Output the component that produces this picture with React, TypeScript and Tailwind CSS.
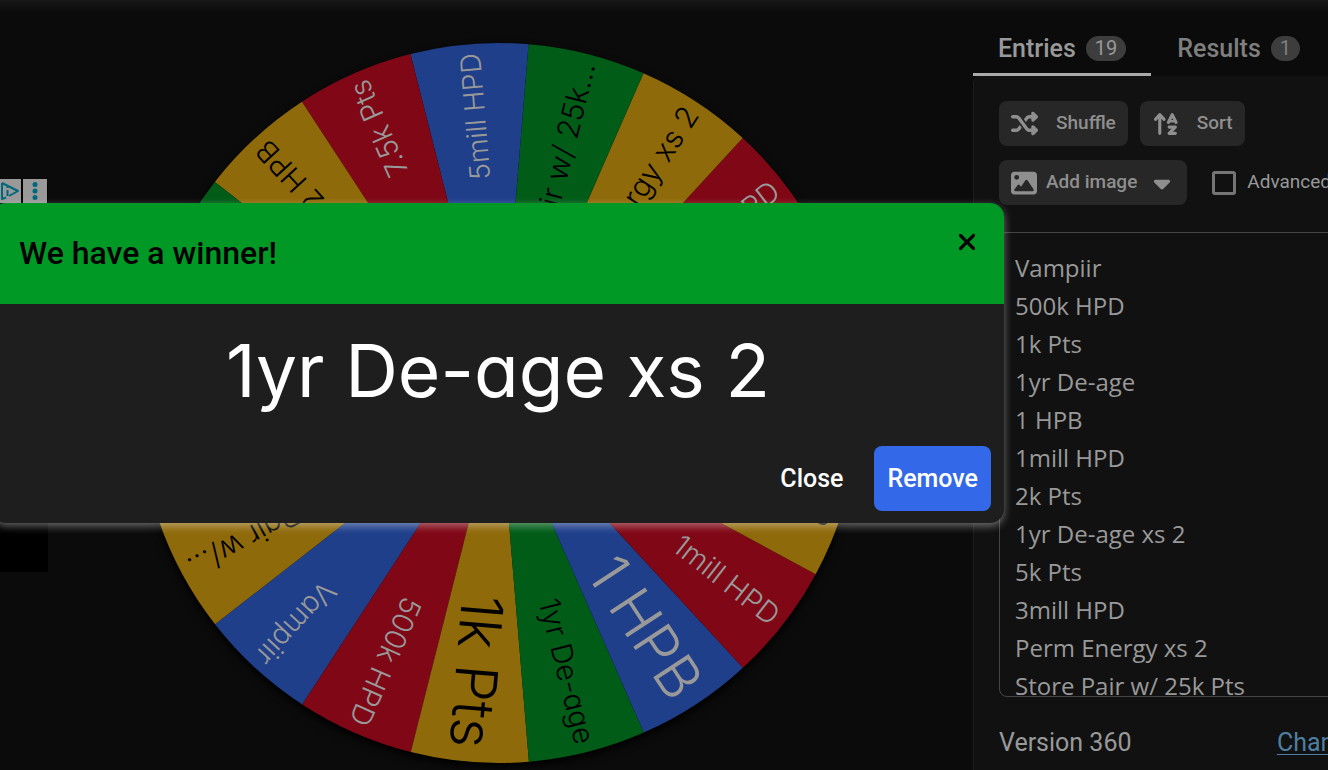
import React, { useState } from 'react';
import { FaArrowUpAZ, FaCaretDown, FaImage, FaShuffle, FaXmark } from 'react-icons/fa6';

interface Slice {
  label: string;
  size?: number;
}

const slices: Slice[] = [
  { label: 'Vampiir' },
  { label: '500k HPD' },
  { label: '1k Pts', size: 58 },
  { label: '1yr De-age' },
  { label: '1 HPB', size: 58 },
  { label: '1mill HPD' },
  { label: '2k Pts' },
  { label: '1yr De-age xs 2' },
  { label: '5k Pts' },
  { label: '3mill HPD' },
  { label: 'Perm Energy xs 2', size: 30 },
  { label: 'Store Pair w/ 25k...', size: 30 },
  { label: '5mill HPD', size: 28 },
  { label: '7.5k Pts' },
  { label: '2 HPB' },
  { label: '' },
  { label: '' },
  { label: '' },
  { label: 'Store Pair w/...', size: 30 },
];

const entries = [
  'Vampiir',
  '500k HPD',
  '1k Pts',
  '1yr De-age',
  '1 HPB',
  '1mill HPD',
  '2k Pts',
  '1yr De-age xs 2',
  '5k Pts',
  '3mill HPD',
  'Perm Energy xs 2',
  'Store Pair w/ 25k Pts',
].join('\n');

const colors = [
  { fill: '#1f3f8b', text: '#999999' },
  { fill: '#800816', text: '#999999' },
  { fill: '#8f6a0a', text: '#000000' },
  { fill: '#005c17', text: '#000000' },
];

const RADIUS = 360;
const STEP = 360 / slices.length;
// Angle of the middle of the first slice, measured clockwise from three o'clock
const START = 132.6;

function rim(deg: number) {
  const rad = (deg * Math.PI) / 180;
  return `${RADIUS * Math.cos(rad)} ${RADIUS * Math.sin(rad)}`;
}

function Wheel() {
  return (
    <svg viewBox="-375 -375 750 750" className="w-full max-w-[750px]" role="img" aria-label="Prize wheel">
      <circle r={RADIUS} cy={4} fill="#000" className="blur-[4px]" />
      {slices.map((slice, i) => {
        const mid = START - i * STEP;
        const color = colors[i === slices.length - 1 ? 2 : i % 4];
        return (
          <g key={i}>
            <path d={`M0 0L${rim(mid - STEP / 2)}A${RADIUS} ${RADIUS} 0 0 1 ${rim(mid + STEP / 2)}Z`} fill={color.fill} />
            <text
              transform={`rotate(${mid})`}
              x={slice.size === 58 ? 346 : 351}
              textAnchor="end"
              dominantBaseline="central"
              fontSize={slice.size ?? 29}
              fill={color.text}
              className="font-['Inter',sans-serif] font-[350] [font-feature-settings:'cv11']"
            >
              {slice.label}
            </text>
          </g>
        );
      })}
    </svg>
  );
}

function AdStrip() {
  return (
    <div className="absolute top-[179px] left-0 flex h-[393px] w-12 items-start gap-0.5 bg-black">
      <button aria-label="Ad choices" className="h-6 w-[21px] bg-[#999]">
        <svg viewBox="0 0 21 24" className="h-6 w-[21px]" fill="none" stroke="#00687c" strokeWidth="2" strokeLinejoin="round">
          <path d="M2 4v16l4-1.500M2 4l16 8-9 5" />
          <path d="M7.500 11v6M7.500 7.500v1.500" />
        </svg>
      </button>
      <button aria-label="Ad options" className="h-6 w-6 bg-[#999]">
        <svg viewBox="0 0 24 24" className="h-6 w-6" fill="#00687c">
          <circle cx="12" cy="5.500" r="2.500" />
          <circle cx="12" cy="12" r="2.500" />
          <circle cx="12" cy="18.500" r="2.500" />
        </svg>
      </button>
    </div>
  );
}

function Tab({ label, count, active }: { label: string; count: number; active?: boolean }) {
  return (
    <button
      role="tab"
      aria-selected={!!active}
      className={`flex h-[55px] items-center gap-2.5 border-b-3 px-[25px] pt-1 text-[25px] font-medium ${active ? 'border-[#aaa] text-[#999]' : 'border-transparent text-[#7f7f7f]'}`}
    >
      {label}
      <span className="mb-0.5 rounded-full bg-[#3d3d3d] px-[9px] text-[20px] leading-[25px] font-normal">{count}</span>
    </button>
  );
}

const toolButton = 'flex h-[45px] items-center rounded-lg bg-[#272727] px-3 text-[19px] font-medium text-[#8f8f8f]';

function Sidebar() {
  const [text, setText] = useState(entries);
  return (
    <aside className="w-[355px] shrink-0 overflow-hidden pt-[21px]">
      <div className="flex w-[430px] flex-col">
        <div role="tablist" className="flex gap-px">
          <Tab label="Entries" count={19} active />
          <Tab label="Results" count={1} />
        </div>
        <div className="min-h-[720px] rounded-tl-lg border-l border-[#1c1c1c] bg-[#111] pt-[25px] pl-[25px]">
          <div className="flex gap-3">
            <button className={`${toolButton} gap-[18px]`}>
              <FaShuffle size={27} />
              Shuffle
            </button>
            <button className={`${toolButton} gap-[17px]`}>
              <FaArrowUpAZ size={28} />
              Sort
            </button>
          </div>
          <div className="mt-3.5 flex items-center gap-[25px]">
            <button className={toolButton}>
              <FaImage size={26} />
              <span className="mr-3 ml-[9px]">Add image</span>
              <FaCaretDown size={26} />
            </button>
            <label className="flex items-center gap-[11px] text-[19px] text-[#999]">
              <input type="checkbox" className="size-6 appearance-none rounded-[3px] border-3 border-[#757575]" />
              Advanced
            </label>
          </div>
          <textarea
            aria-label="Entries"
            value={text}
            onChange={(e) => setText(e.target.value)}
            className="mt-[27px] block h-[465px] w-full resize-none overflow-hidden rounded-lg border border-[#454545] bg-transparent px-[15px] pt-4 font-['Open_Sans','Noto_Sans',sans-serif] text-[24px] leading-[38px] text-[#999]"
          />
          <div className="mt-7 flex items-center justify-between pr-[7px] text-[25px] leading-9 text-[#999]">
            <span>Version 360</span>
            <a href="#changelog" className="text-[#4f7fa0] underline decoration-1 underline-offset-3">
              Changelog
            </a>
          </div>
        </div>
      </div>
    </aside>
  );
}

function WinnerDialog() {
  return (
    <div className="absolute inset-0 flex items-start pt-[203px]">
      <div
        role="dialog"
        aria-labelledby="winner-title"
        className="mr-[324px] -ml-2 flex-1 overflow-hidden rounded-[14px] bg-[#1e1e1e] shadow-[0_3px_8px_rgba(255,255,255,0.4)]"
      >
        <header className="flex h-[101px] items-start justify-between bg-[#009926] pr-6 pl-[27px] text-black">
          <h2 id="winner-title" className="self-center pb-0.5 text-[32px] font-medium">
            We have a winner!
          </h2>
          <button aria-label="Dismiss" className="mt-[26px]">
            <FaXmark size={26} />
          </button>
        </header>
        <p className="pt-4 text-center font-['Inter',sans-serif] text-[73px] leading-[102px] font-[370] text-white [font-feature-settings:'cv11']">
          1yr De-age xs 2
        </p>
        <footer className="flex justify-end gap-[18px] px-[13px] pt-6 pb-3 text-[25px] font-medium text-white">
          <button className="h-[65px] rounded-lg px-[13px]">Close</button>
          <button className="h-[65px] rounded-lg bg-[#3369e8] px-[13px]">Remove</button>
        </footer>
      </div>
    </div>
  );
}

export default function App() {
  return (
    <div className="relative h-screen overflow-hidden bg-[#0b0b0b] font-['Roboto',sans-serif]">
      <div className="absolute inset-x-0 top-0 h-3 bg-gradient-to-b from-[#181818] to-[#0b0b0b]" />
      <div className="flex items-start">
        <main className="flex min-w-0 flex-1 justify-center pt-7 pl-6">
          <Wheel />
        </main>
        <Sidebar />
      </div>
      <AdStrip />
      <WinnerDialog />
    </div>
  );
}
